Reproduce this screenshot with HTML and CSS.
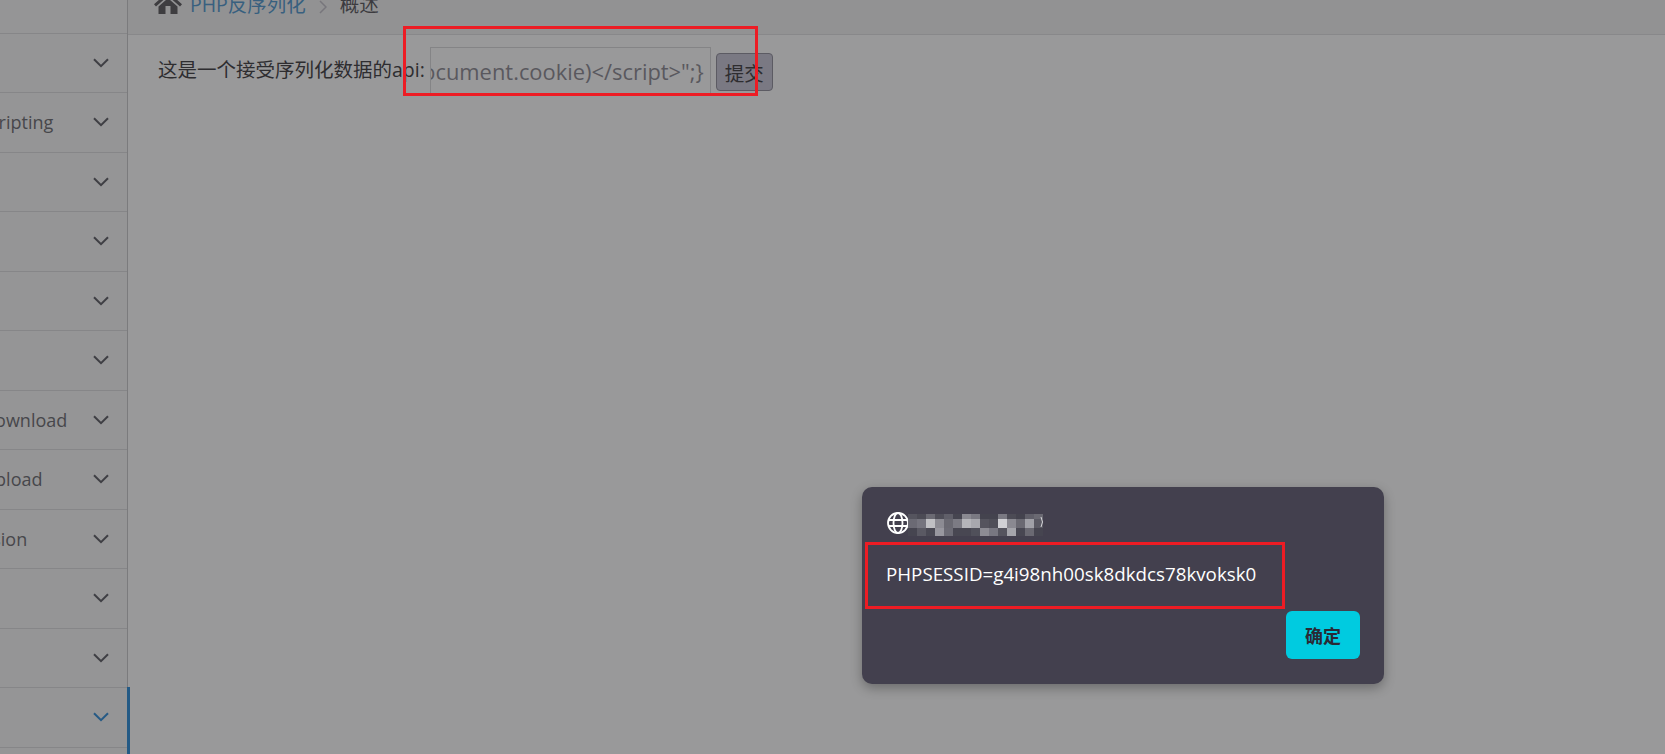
FILE: index.html
```html
<!DOCTYPE html>
<html lang="zh">
<head>
<meta charset="utf-8">
<title>PHP反序列化</title>
<link rel="stylesheet" href="styles.css">
</head>
<body>
<svg class="defs" width="0" height="0" aria-hidden="true"><defs><symbol id="chev" viewBox="0 0 16 10"><path d="M1 1.2 8 8.2 15 1.2" fill="none" stroke="currentColor" stroke-width="2"/></symbol></defs></svg>
<div class="page">
  <aside class="sidebar">
    <div class="top-row"></div>
    <div class="row"><span class="label">Burt Force</span><svg class="chev"><use href="#chev"/></svg></div>
    <div class="row"><span class="label">Cross-Site Scripting</span><svg class="chev"><use href="#chev"/></svg></div>
    <div class="row"><span class="label">CSRF</span><svg class="chev"><use href="#chev"/></svg></div>
    <div class="row"><span class="label">SQL-Inject</span><svg class="chev"><use href="#chev"/></svg></div>
    <div class="row"><span class="label">RCE</span><svg class="chev"><use href="#chev"/></svg></div>
    <div class="row"><span class="label">File Inclusion</span><svg class="chev"><use href="#chev"/></svg></div>
    <div class="row"><span class="label">Unsafe Filedownload</span><svg class="chev"><use href="#chev"/></svg></div>
    <div class="row"><span class="label">Unsafe Fileupload</span><svg class="chev"><use href="#chev"/></svg></div>
    <div class="row"><span class="label label-tight">Over Permission</span><svg class="chev"><use href="#chev"/></svg></div>
    <div class="row"><span class="label">../../</span><svg class="chev"><use href="#chev"/></svg></div>
    <div class="row"><span class="label">敏感信息</span><svg class="chev"><use href="#chev"/></svg></div>
    <div class="row active"><span class="label">PHP反序列化</span><svg class="chev"><use href="#chev"/></svg></div>
  </aside>
  <main class="main">
    <header class="crumbs">
      <svg class="home" viewBox="0 0 28 18" width="28" height="18"><path d="M14 -4 0 8.200 2 10.400 14 0 26 10.400 28 8.200 23 3.800V-3H19V.3ZM4.500 10.500 14 2.200 23.500 10.500V18H16.500V10H11.500V18H4.500Z" fill="#3e3d40"/></svg>
      <a class="crumb-link">PHP反序列化</a>
      <svg class="crumb-sep" viewBox="0 0 8 14" width="8" height="14"><path d="M1 1 7 7 1 13" fill="none" stroke="#77767c" stroke-width="1.500"/></svg>
      <span class="crumb-cur">概述</span>
    </header>
    <section class="content">
      <span class="prompt">这是一个接受序列化数据的api:</span>
      <div class="field"><span class="field-text">O:1:"S":1:{s:1:"s";s:39:"&lt;script&gt;alert(document.cookie)&lt;/script&gt;";}</span></div>
      <button class="submit" type="button">提交</button>
    </section>
  </main>
</div>
<div class="annot annot-a"></div>
<div class="dialog">
  <div class="dialog-origin">
    <svg class="globe" viewBox="0 0 24 24" width="24" height="24"><g fill="none" stroke="#fff" stroke-width="1.800"><circle cx="12" cy="12" r="10"/><ellipse cx="12" cy="12" rx="4.500" ry="10"/><path d="M2.500 9H21.500M2.500 15H21.500"/></g></svg>
    <svg class="mosaic" viewBox="0 0 137 22" width="137" height="22" shape-rendering="crispEdges">
      <g>
        <rect x="0" y="0" width="9" height="5" fill="#55545e"/><rect x="9" y="0" width="9" height="5" fill="#4c4b55"/><rect x="18" y="0" width="9" height="5" fill="#6b6a73"/><rect x="27" y="0" width="9" height="5" fill="#4f4e58"/><rect x="36" y="0" width="9" height="5" fill="#605f69"/><rect x="45" y="0" width="9" height="5" fill="#464550"/><rect x="54" y="0" width="9" height="5" fill="#8a8991"/><rect x="63" y="0" width="9" height="5" fill="#7a7982"/><rect x="72" y="0" width="18" height="5" fill="#44434e"/><rect x="90" y="0" width="9" height="5" fill="#7a7982"/><rect x="99" y="0" width="9" height="5" fill="#4c4b55"/><rect x="108" y="0" width="9" height="5" fill="#44434e"/><rect x="117" y="0" width="9" height="5" fill="#605f69"/><rect x="126" y="0" width="9" height="5" fill="#6a6972"/>
        <rect x="0" y="5" width="9" height="9" fill="#6b6a74"/><rect x="9" y="5" width="9" height="9" fill="#75747e"/><rect x="18" y="5" width="9" height="9" fill="#c0c0c4"/><rect x="27" y="5" width="9" height="9" fill="#8c8b93"/><rect x="36" y="5" width="9" height="9" fill="#6a6972"/><rect x="45" y="5" width="9" height="9" fill="#7c7b84"/><rect x="54" y="5" width="9" height="9" fill="#b5b5ba"/><rect x="63" y="5" width="9" height="9" fill="#a8a8ae"/><rect x="72" y="5" width="9" height="9" fill="#55545e"/><rect x="81" y="5" width="9" height="9" fill="#4f4e58"/><rect x="90" y="5" width="9" height="9" fill="#d0d0d4"/><rect x="99" y="5" width="9" height="9" fill="#8a8991"/><rect x="108" y="5" width="9" height="9" fill="#6a6972"/><rect x="117" y="5" width="9" height="9" fill="#a0a0a7"/><rect x="126" y="5" width="9" height="9" fill="#5a5963"/>
        <rect x="0" y="14" width="9" height="8" fill="#464550"/><rect x="9" y="14" width="9" height="8" fill="#5a5963"/><rect x="18" y="14" width="9" height="8" fill="#4a4954"/><rect x="27" y="14" width="9" height="8" fill="#98979f"/><rect x="36" y="14" width="9" height="8" fill="#6c6b75"/><rect x="45" y="14" width="18" height="8" fill="#484752"/><rect x="63" y="14" width="9" height="8" fill="#50505a"/><rect x="72" y="14" width="9" height="8" fill="#8d8c94"/><rect x="81" y="14" width="9" height="8" fill="#787781"/><rect x="90" y="14" width="9" height="8" fill="#55545e"/><rect x="99" y="14" width="9" height="8" fill="#a5a5ab"/><rect x="108" y="14" width="9" height="8" fill="#484752"/><rect x="117" y="14" width="9" height="8" fill="#6a6972"/><rect x="126" y="14" width="9" height="8" fill="#464550"/>
      </g>
      <path d="M133 3Q136 8 133 13" fill="none" stroke="#d8d8dc" stroke-width="1" shape-rendering="auto"/>
    </svg>
  </div>
  <div class="dialog-msg">PHPSESSID=g4i98nh00sk8dkdcs78kvoksk0</div>
  <div class="dialog-actions"><button class="ok" type="button">确定</button></div>
</div>
<div class="annot annot-b"></div>
</body>
</html>
```
FILE: styles.css
```css
html, body { margin: 0; height: 754px; overflow: hidden; }
body { background: #99999a; color: #2e2d30; font-family: "Open Sans", "Noto Sans CJK SC", sans-serif; }
.defs { position: absolute; top: 0; left: 0; }
.page { display: flex; height: 754px; width: 1665px; overflow: hidden; }

.sidebar { position: relative; flex: none; width: 235px; margin-left: -108px; background: #959596; border-right: 1px solid #7b7b7d; }
.top-row { height: 33.500px; box-sizing: border-box; border-bottom: 1px solid #868688; }
.row { position: relative; height: 59.500px; box-sizing: border-box; border-bottom: 1px solid #868688; display: flex; align-items: center; justify-content: space-between; padding-right: 18px; color: #47474b; font-size: 18px; }
.label { white-space: nowrap; }
.label-tight { word-spacing: -3px; }
.chev { width: 16px; height: 10px; color: #3f3f44; }
.active .chev { color: #265a85; }
.active::after { content: ""; position: absolute; right: -3px; top: -1px; bottom: -20px; width: 3px; background: #245a85; }

.main { flex: 1; min-width: 0; display: flex; flex-direction: column; }
.crumbs { height: 35px; box-sizing: border-box; flex: none; background: #929293; border-bottom: 1px solid #88888a; display: flex; align-items: flex-end; padding: 0 0 18px 26px; font-size: 19.500px; line-height: 22px; overflow: hidden; }
.home { flex: none; margin-bottom: 2px; margin-right: 8px; }
.crumb-link { color: #38607f; }
.crumb-sep { flex: none; margin: 0 13px 2px 13px; }
.crumb-cur { color: #3c3b3f; }

.content { display: flex; align-items: flex-start; padding: 12px 0 0 30px; font-size: 19.500px; }
.prompt { margin-top: 8px; line-height: 30px; color: #2e2d30; white-space: nowrap; }
.field { flex: none; width: 281px; height: 49px; margin-left: 5px; box-sizing: border-box; border: 1px solid #848486; display: flex; justify-content: flex-end; align-items: center; padding: 0 6px; overflow: hidden; color: #59585e; font-size: 21.900px; }
.field-text { white-space: nowrap; flex: none; }
.submit { flex: none; width: 57px; height: 38px; margin: 6px 0 0 5px; padding: 0; box-sizing: border-box; background: #7a7983; border: 1px solid #5c5b63; border-radius: 4px; color: #2e2d30; font: 19.500px "Noto Sans CJK SC", sans-serif; }

.annot { position: absolute; box-sizing: border-box; border: 3px solid #ed1c24; }
.annot-a { left: 403px; top: 26px; width: 355px; height: 70px; }
.annot-b { left: 865px; top: 542px; width: 420px; height: 67px; }

.dialog { position: absolute; left: 862px; top: 487px; width: 522px; height: 197px; box-sizing: border-box; padding: 23px 24px 24px 24px; background: #43404e; border-radius: 10px; box-shadow: 0 4px 12px rgba(0,0,0,.3); color: #fff; display: flex; flex-direction: column; }
.dialog-origin { display: flex; align-items: center; height: 26px; }
.globe { flex: none; }
.mosaic { flex: none; margin-top: 3px; margin-left: -2px; }
.dialog-msg { margin: 26px 0 0 0; font-size: 18.750px; line-height: 24px; white-space: nowrap; }
.dialog-actions { display: flex; justify-content: flex-end; margin-top: 25px; }
.ok { width: 74px; height: 48px; padding: 0; background: #00cbe0; border: 0; border-radius: 6px; color: #2a2a35; font: bold 18px "Noto Sans CJK SC", sans-serif; }
```
